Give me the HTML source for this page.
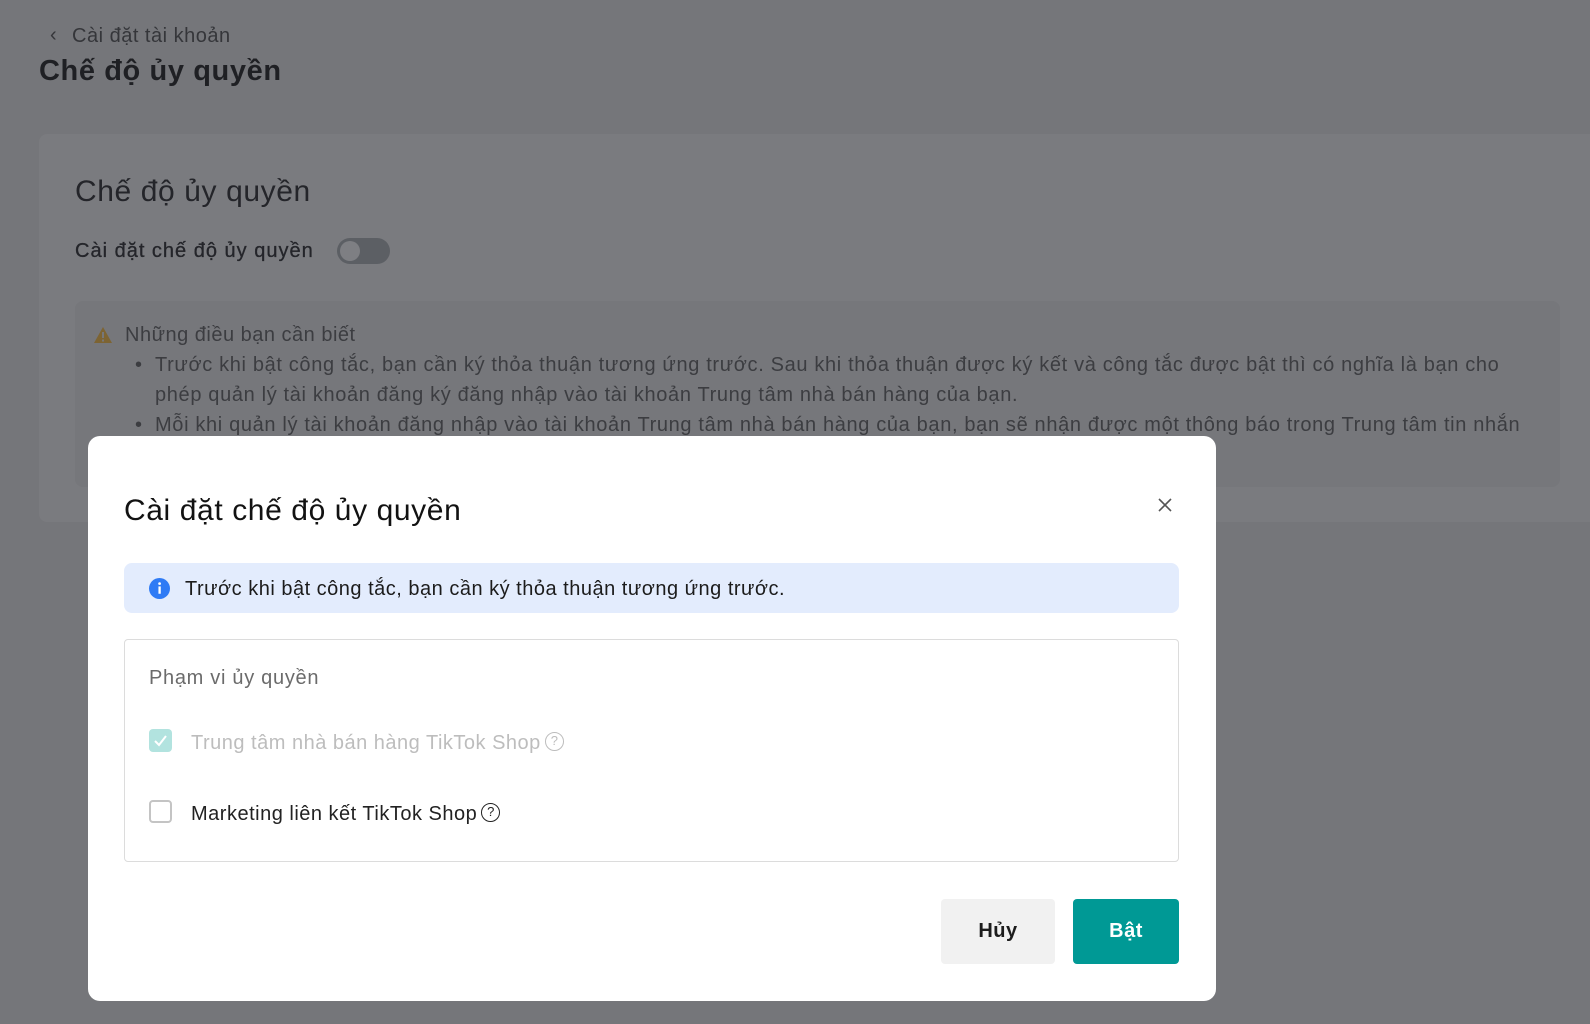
<!DOCTYPE html>
<html><head><meta charset="utf-8"><style>
*{margin:0;padding:0;box-sizing:border-box}
body{width:1590px;height:1024px;background:#75767a;font-family:"Liberation Sans",sans-serif;position:relative;overflow:hidden;color:#2b2c30}
.a{position:absolute;white-space:nowrap;letter-spacing:0.5px}
.q{display:inline-block;width:19px;height:19px;border:1.6px solid;border-radius:50%;font-size:13px;line-height:16px;text-align:center;vertical-align:middle;letter-spacing:0;margin-left:4px;position:relative;top:-2px}
</style></head><body>
<div class="a" style="left:50px;top:24px;font-size:20px;color:#35363a">‹</div>
<div class="a" style="left:72px;top:25px;font-size:20px;color:#35363a">Cài đặt tài khoản</div>
<div class="a" style="left:39px;top:55px;font-size:29px;font-weight:bold;color:#1f2024;letter-spacing:0.6px">Chế độ ủy quyền</div>
<div class="a" style="left:39px;top:134px;width:1560px;height:388px;background:#7a7b7f;border-radius:8px"></div>
<div class="a" style="left:75px;top:175px;font-size:30px;color:#24252a;letter-spacing:0.6px">Chế độ ủy quyền</div>
<div class="a" style="left:75px;top:240px;font-size:20px;color:#24252a;letter-spacing:1px;-webkit-text-stroke:0.3px #24252a">Cài đặt chế độ ủy quyền</div>
<div class="a" style="left:337px;top:238px;width:53px;height:26px;border-radius:13px;background:#5c5f64"><div style="position:absolute;left:3px;top:3px;width:20px;height:20px;border-radius:50%;background:#7e7f83"></div></div>
<div class="a" style="left:75px;top:301px;width:1485px;height:186px;background:#76777b;border-radius:8px"></div>
<svg class="a" style="left:93px;top:326px" width="20" height="18" viewBox="0 0 20 18"><path d="M10 1L19 17H1Z" fill="#7d6433"/><rect x="9" y="6" width="2" height="6" fill="#76777b"/><rect x="9" y="13.5" width="2" height="2" fill="#76777b"/></svg>
<div class="a" style="left:125px;top:324px;font-size:20px;color:#3c3d41">Những điều bạn cần biết</div>
<div class="a" style="left:135px;top:350px;font-size:20px;line-height:30px;color:#3c3d41">•</div>
<div class="a" style="left:155px;top:350px;font-size:20px;line-height:30px;color:#3c3d41;letter-spacing:0.65px">Trước khi bật công tắc, bạn cần ký thỏa thuận tương ứng trước. Sau khi thỏa thuận được ký kết và công tắc được bật thì có nghĩa là bạn cho<br>phép quản lý tài khoản đăng ký đăng nhập vào tài khoản Trung tâm nhà bán hàng của bạn.</div>
<div class="a" style="left:135px;top:410px;font-size:20px;line-height:30px;color:#3c3d41">•</div>
<div class="a" style="left:155px;top:410px;font-size:20px;line-height:30px;color:#3c3d41;letter-spacing:0.65px">Mỗi khi quản lý tài khoản đăng nhập vào tài khoản Trung tâm nhà bán hàng của bạn, bạn sẽ nhận được một thông báo trong Trung tâm tin nhắn</div>

<div class="a" style="left:88px;top:436px;width:1128px;height:565px;background:#fff;border-radius:12px"></div>
<div class="a" style="left:124px;top:494px;font-size:30px;color:#121212;letter-spacing:0.6px">Cài đặt chế độ ủy quyền</div>
<svg class="a" style="left:1157px;top:497px" width="16" height="16" viewBox="0 0 16 16"><path d="M2 2L14 14M14 2L2 14" stroke="#555" stroke-width="1.6"/></svg>
<div class="a" style="left:124px;top:563px;width:1055px;height:50px;background:#e3ecfd;border-radius:8px"></div>
<svg class="a" style="left:149px;top:578px" width="21" height="21" viewBox="0 0 20 20"><circle cx="10" cy="10" r="10" fill="#2f7bf5"/><rect x="9" y="8" width="2.2" height="7" fill="#fff"/><circle cx="10.1" cy="5.3" r="1.3" fill="#fff"/></svg>
<div class="a" style="left:185px;top:578px;font-size:20px;color:#1c1c1c">Trước khi bật công tắc, bạn cần ký thỏa thuận tương ứng trước.</div>
<div class="a" style="left:124px;top:639px;width:1055px;height:223px;border:1px solid #dcdcdc;border-radius:4px"></div>
<div class="a" style="left:149px;top:667px;font-size:20px;color:#6b6b6b;letter-spacing:0.7px">Phạm vi ủy quyền</div>
<div class="a" style="left:149px;top:729px;width:23px;height:23px;background:#b2e3df;border-radius:4px"><svg width="23" height="23" viewBox="0 0 23 23"><path d="M6 12l4 4 7-9" stroke="#fff" stroke-width="2" fill="none"/></svg></div>
<div class="a" style="left:191px;top:732px;font-size:20px;color:#bdbdbd">Trung tâm nhà bán hàng TikTok Shop<span class="q" style="border-color:#bdbdbd">?</span></div>
<div class="a" style="left:149px;top:800px;width:23px;height:23px;border:2px solid #c4c4c4;border-radius:4px"></div>
<div class="a" style="left:191px;top:803px;font-size:20px;color:#222">Marketing liên kết TikTok Shop<span class="q" style="border-color:#222">?</span></div>
<div class="a" style="left:941px;top:899px;width:114px;height:65px;background:#f1f1f1;border-radius:4px;font-size:20px;font-weight:bold;color:#1c1c1c;text-align:center;line-height:65px">Hủy</div>
<div class="a" style="left:1073px;top:899px;width:106px;height:65px;background:#009995;border-radius:4px;font-size:20px;font-weight:bold;color:#fff;text-align:center;line-height:65px">Bật</div>
</body></html>
